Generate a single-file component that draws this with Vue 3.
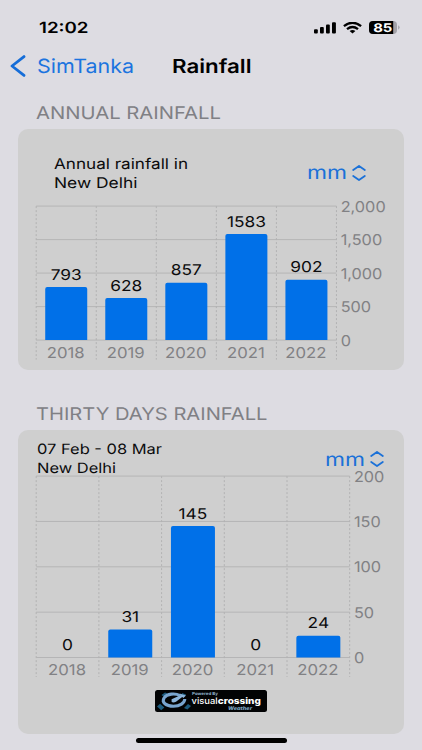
<template>
  <div class="screen">
    <div class="status-bar">
      <FitText text="12:02" :width="49.5" :size="15.4" :weight="600" />
      <div class="status-icons">
        <svg class="signal" width="22" height="12" viewBox="0 0 22 12">
          <rect x="0" y="7.2" width="3.8" height="4.3" rx="1" />
          <rect x="6" y="5" width="3.8" height="6.5" rx="1" />
          <rect x="12" y="2.6" width="3.8" height="8.9" rx="1" />
          <rect x="18" y="0.3" width="3.9" height="11.2" rx="1" />
        </svg>
        <svg class="wifi" width="19" height="12" viewBox="0 0 19 12">
          <path d="M0.9 4.2 Q9.5 -2.7 18.1 4.2" />
          <path d="M4 7.2 Q9.5 2.8 15 7.2" />
          <path class="dot" d="M6.6 9 Q9.5 7 12.4 9 L9.5 11.6 Z" />
        </svg>
        <svg class="battery" width="31" height="13" viewBox="0 0 31 13">
          <rect class="rest" x="0" y="0" width="28" height="13" rx="4" />
          <path d="M4 0 H24.2 V13 H4 A4 4 0 0 1 0 9 V4 A4 4 0 0 1 4 0 Z" />
          <path class="rest" d="M29.2 4.3 Q32 6.5 29.2 8.7 Z" />
          <text x="4.2" y="10.7" textLength="19.2" lengthAdjust="spacingAndGlyphs">85</text>
        </svg>
      </div>
    </div>

    <div class="nav-bar">
      <svg class="back" width="16" height="22" viewBox="0 0 16 22">
        <path d="M14 1.6 L2 11 L14 20.4" />
      </svg>
      <FitText class="link" text="SimTanka" :width="97" :size="19.6" />
      <FitText class="title" text="Rainfall" :width="79.5" :size="19.4" :weight="600" />
    </div>

    <section v-for="c in charts" :key="c.id" class="section" :class="c.id">
      <FitText class="section-title" :text="c.title" :width="c.titleWidth" :size="17.4" />
      <div class="card">
        <div class="card-head">
          <div class="lines">
            <FitText v-for="l in c.lines" :key="l.text" :text="l.text" :width="l.width" :size="c.lineSize" />
          </div>
          <div class="picker">
            <FitText text="mm" :width="40" :size="19" />
            <svg class="updown" width="14" height="16" viewBox="0 0 14 16">
              <path d="M1.2 5 L7 0.9 L12.8 5 M1.2 11 L7 15.1 L12.8 11" />
            </svg>
          </div>
        </div>

        <svg class="plot" width="386" :height="plotHeight(c)">
          <g transform="translate(18.2 10.1)">
            <line
              v-for="t in c.ticks"
              :key="t"
              class="grid"
              x1="0"
              :x2="c.band * 5"
              :y1="yOf(c, t)"
              :y2="yOf(c, t)"
            />
            <line
              v-for="n in 6"
              :key="'v' + n"
              class="grid dotted"
              :x1="(n - 1) * c.band"
              :x2="(n - 1) * c.band"
              y1="0"
              :y2="c.height + 19.5"
            />
            <g v-for="(b, i) in c.bars" :key="b.year">
              <path v-if="b.value" class="bar" :d="barPath(c, b, i)" />
              <text class="value" :transform="place(mid(c, i), yOf(c, b.value) - 7.3, 1.17)">{{ b.value }}</text>
              <text class="year" :transform="place(mid(c, i) - 0.5, c.height + 17.4, 1.13)">{{ b.year }}</text>
            </g>
            <text
              v-for="t in c.ticks"
              :key="'t' + t"
              class="tick"
              :transform="place(c.band * 5 + 4.2, yOf(c, t) + 5.4, 1.1)"
            >{{ t.toLocaleString('en-US') }}</text>
          </g>
        </svg>

        <div v-if="c.badge" class="badge">
          <svg width="112" height="22" viewBox="0 0 112 22">
            <g class="logo-fins">
              <path d="M2 16.4 L5 13.8 L9.4 17.6 L6.2 20.2 Z" />
              <path d="M29 18 L33 14 L36 16 L32.4 19.6 Z" />
              <path d="M6.5 5 L10 2.4 L12.5 3.6 L8.4 6.6 Z" />
              <path d="M27 3 L31 4.4 L30 6 L26.6 5 Z" />
            </g>
            <path class="logo-ring" d="M25 5.6 C20 2.8 12 3.6 9 8 C6.4 12.4 11 16.2 18.4 16.2 C25 16.2 29.6 13 29.8 9" />
            <path class="logo-hand" d="M16.6 9.2 L25.4 5.2 L24.6 3.6 L31 5.4 L28.4 8 L27.2 6.9 L21 11.8 Q18 13 16.6 11.8 Z" />
            <text class="powered" x="37" y="5.3" textLength="26" lengthAdjust="spacingAndGlyphs">Powered By</text>
            <text class="visual" x="36.6" y="14" textLength="26" lengthAdjust="spacingAndGlyphs">visual</text>
            <text class="visual crossing" x="62.8" y="14" textLength="43" lengthAdjust="spacingAndGlyphs">crossing</text>
            <text class="weather" x="73" y="19.8" textLength="24" lengthAdjust="spacingAndGlyphs">Weather</text>
          </svg>
        </div>
      </div>
    </section>

    <div class="home-indicator"></div>
  </div>
</template>

<script setup>
import { h } from 'vue'

// one line of text set to an exact width, capitals centred in its box
const FitText = (props) =>
  h('svg', { width: props.width, height: props.size, style: { display: 'block', overflow: 'visible', flex: 'none' } }, [
    h('text', {
      x: 0,
      y: props.size * 0.8635,
      fill: 'currentColor',
      'font-size': props.size,
      'font-weight': props.weight || 400,
      textLength: props.width,
      lengthAdjust: 'spacingAndGlyphs',
    }, props.text),
  ])
FitText.props = ['text', 'width', 'size', 'weight']

const charts = [
  {
    id: 'annual',
    title: 'ANNUAL RAINFALL',
    titleWidth: 185,
    lines: [
      { text: 'Annual rainfall in', width: 134 },
      { text: 'New Delhi', width: 83.5 },
    ],
    lineSize: 14.8,
    band: 60.05,
    barWidth: 42,
    height: 134,
    max: 2000,
    ticks: [2000, 1500, 1000, 500, 0],
    bars: [
      { year: '2018', value: 793 },
      { year: '2019', value: 628 },
      { year: '2020', value: 857 },
      { year: '2021', value: 1583 },
      { year: '2022', value: 902 },
    ],
  },
  {
    id: 'thirty',
    title: 'THIRTY DAYS RAINFALL',
    titleWidth: 231.5,
    lines: [
      { text: '07 Feb - 08 Mar', width: 125 },
      { text: 'New Delhi', width: 79 },
    ],
    lineSize: 14.2,
    band: 62.7,
    barWidth: 44,
    height: 181.4,
    max: 200,
    ticks: [200, 150, 100, 50, 0],
    bars: [
      { year: '2018', value: 0 },
      { year: '2019', value: 31 },
      { year: '2020', value: 145 },
      { year: '2021', value: 0 },
      { year: '2022', value: 24 },
    ],
    badge: true,
  },
]

const plotHeight = (c) => c.height + 32
const yOf = (c, v) => c.height * (1 - v / c.max)
const mid = (c, i) => (i + 0.5) * c.band
const place = (x, y, stretch) => `translate(${x} ${y}) scale(${stretch} 1)`

function barPath(c, b, i) {
  const x = mid(c, i) - c.barWidth / 2
  const y = yOf(c, b.value)
  return `M${x} ${c.height} V${y + 2} q0 -2 2 -2 H${x + c.barWidth - 2} q2 0 2 2 V${c.height} Z`
}
</script>

<style>
body {
  background: #dddce2;
}
</style>

<style scoped>
.screen {
  width: 422px;
  height: 750px;
  overflow: hidden;
  background: #dddce2;
  color: #0b0b0c;
  font-family: Inter, "Liberation Sans", sans-serif;
  text-rendering: geometricPrecision;
}
svg { display: block; flex: none; }
.status-bar {
  height: 55px;
  padding: 0 22px 0 38.5px;
  display: flex;
  align-items: center;
  justify-content: space-between;
  color: #000;
}
.status-icons { display: flex; align-items: center; }
.wifi { margin: 0 7.5px 0 7px; }
.wifi path { fill: none; stroke: #000; stroke-width: 2.3; }
.wifi .dot { fill: #000; stroke: none; }
.battery .rest { fill: #a3a2a8; }
.battery text { fill: #fff; font-size: 12px; font-weight: 700; }
.nav-bar {
  height: 21px;
  padding-left: 11px;
  display: flex;
  align-items: center;
}
.back { margin: 0 11px 0 -1px; }
.back path {
  fill: none;
  stroke: #156dd8;
  stroke-width: 2.8;
  stroke-linecap: round;
  stroke-linejoin: round;
}
.link { color: #1b74df; }
.title { color: #000; margin-left: 37.6px; }
.section { padding: 0 18px; }
.annual { padding-top: 28.3px; }
.thirty { padding-top: 34.5px; }
.section-title { color: #808085; margin: 0 0 7.8px 18.2px; }
.card {
  width: 386px;
  border-radius: 10px;
  background: #cfcfcf;
}
.annual .card { height: 241px; }
.thirty .card { height: 304px; }
.card-head {
  box-sizing: border-box;
  display: flex;
  align-items: flex-start;
  justify-content: space-between;
}
.annual .card-head { height: 66.8px; padding: 26.4px 38px 0 36.3px; }
.thirty .card-head { height: 36.3px; padding: 11.9px 20px 0 18.5px; }
.lines { display: flex; flex-direction: column; gap: 4.6px; }
.picker {
  height: 34px;
  display: flex;
  align-items: center;
  gap: 5px;
  color: #1b71d8;
}
.updown path {
  fill: none;
  stroke: #1b71d8;
  stroke-width: 1.8;
  stroke-linecap: round;
  stroke-linejoin: round;
}
.plot { overflow: visible; }
.plot text { font-size: 14.8px; }
.grid { stroke: #b5b5b6; stroke-width: 1; }
.dotted { stroke-dasharray: 2 2; stroke: #b2b2b3; }
.bar { fill: #0070e8; }
.value, .year { text-anchor: middle; }
.value { fill: #0b0b0c; }
.year, .tick { fill: #818184; }
.badge {
  width: 112px;
  height: 22px;
  margin: 10px auto 0 137px;
  border-radius: 2.5px;
  background: #020304;
}
.logo-fins { fill: #1c5a7c; }
.logo-ring { fill: none; stroke: #79a5cf; stroke-width: 3.1; }
.logo-hand { fill: #8bb4da; }
.powered { font-size: 4.2px; font-weight: 700; fill: #8fb0c8; }
.visual { font-size: 9px; font-weight: 500; fill: #fff; }
.crossing { font-weight: 800; }
.weather { font-size: 5px; font-weight: 800; font-style: italic; fill: #7fa9c6; }
.home-indicator {
  width: 151px;
  height: 5px;
  margin: 3.5px auto 0 136px;
  border-radius: 3px;
  background: #000;
}
</style>
